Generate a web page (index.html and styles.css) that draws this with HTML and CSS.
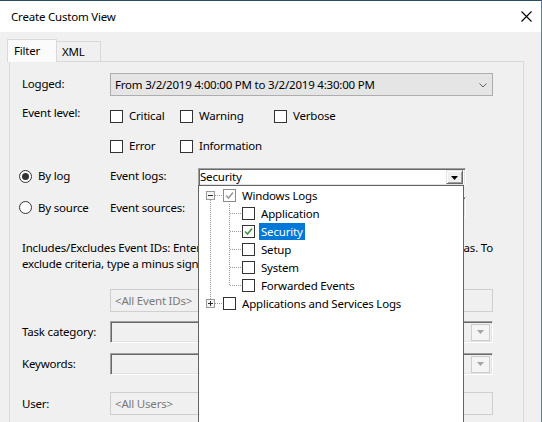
FILE: index.html
```html
<!DOCTYPE html>
<html>
<head>
<meta charset="utf-8">
<title>Create Custom View</title>
<link rel="stylesheet" href="styles.css">
</head>
<body>
<div class="window">
  <div class="titlebar">
    <span class="title">Create Custom View</span>
    <svg class="close" width="11" height="11" viewBox="0 0 11 11"><path d="M0.5 0.5L10.5 10.5M10.5 0.5L0.5 10.5" stroke="#000" stroke-width="1.1" fill="none"/></svg>
  </div>
  <div class="client">
    <div class="tabs">
      <div class="tab active">Filter</div>
      <div class="tab">XML</div>
    </div>
    <div class="panel">
      <div class="row row-logged">
        <div class="lbl">Logged:</div>
        <div class="combo-flat"><span class="ctext">From 3/2/2019 4:00:00 PM to 3/2/2019 4:30:00 PM</span>
          <svg class="chev" width="8" height="5" viewBox="0 0 8 5"><path d="M0.5 0.5L4 4L7.5 0.5" stroke="#606060" fill="none"/></svg>
        </div>
      </div>
      <div class="row row-level">
        <div class="lbl lbl-top">Event level:</div>
        <div class="levels">
          <label class="chk"><span class="cb"></span>Critical</label>
          <label class="chk"><span class="cb"></span>Warning</label>
          <label class="chk"><span class="cb"></span>Verbose</label>
          <label class="chk"><span class="cb"></span>Error</label>
          <label class="chk"><span class="cb"></span>Information</label>
        </div>
      </div>
      <div class="row row-log">
        <label class="rad"><span class="rb on"></span>By log</label>
        <div class="lbl2">Event logs:</div>
        <div class="combo"><span class="ctext2">Security</span><span class="dbtn"><svg width="7" height="4" viewBox="0 0 7 4"><path d="M0 0H7L3.5 4Z" fill="#000"/></svg></span></div>
      </div>
      <div class="row row-source">
        <label class="rad"><span class="rb"></span>By source</label>
        <div class="lbl2">Event sources:</div>
        <div class="combo combo-dis"><span class="ctext2"></span><span class="dbtn dbtn-dis"><svg width="7" height="4" viewBox="0 0 7 4"><path d="M0 0H7L3.5 4Z" fill="#a0a0a0"/></svg></span></div>
      </div>
      <div class="desc">
        <div class="dline first">Includes/Excludes Event IDs: Enter ID numbers and/or ID ranges separated by commas. To</div>
        <div class="dline">exclude criteria, type a minus sign first. For example 1,3,5-99,-76</div>
      </div>
      <div class="row row-ids">
        <div class="lbl"></div>
        <div class="tbox">&lt;All Event IDs&gt;</div>
      </div>
      <div class="row row-task">
        <div class="lbl">Task category:</div>
        <div class="dcombo"><span class="dbtn2"><svg width="7" height="4" viewBox="0 0 7 4"><path d="M0 0H7L3.5 4Z" fill="#a6a6a6"/></svg></span></div>
      </div>
      <div class="row row-kw">
        <div class="lbl">Keywords:</div>
        <div class="dcombo"><span class="dbtn2"><svg width="7" height="4" viewBox="0 0 7 4"><path d="M0 0H7L3.5 4Z" fill="#a6a6a6"/></svg></span></div>
      </div>
      <div class="row row-user">
        <div class="lbl">User:</div>
        <div class="tbox">&lt;All Users&gt;</div>
      </div>
    </div>
  </div>

  <div class="droplist">
    <div class="tnode">
      <svg class="gut0" width="24" height="18" viewBox="0 0 24 18">
        <path d="M11.5 14V18M16 9.5H24" stroke="#9a9a9a" stroke-dasharray="1 1" fill="none"/>
        <rect x="7.5" y="5.5" width="8" height="8" fill="#f4f4f4" stroke="#9a9a9a"/>
        <path d="M9 9.5H14" stroke="#2b2b2b"/>
      </svg>
      <span class="tcb tcb-part"><svg width="11" height="11" viewBox="0 0 11 11"><path d="M2 5.5L4.5 8L9 2.5" stroke="#9a9a9a" stroke-width="1.6" fill="none"/></svg></span>
      <span class="tlabel">Windows Logs</span>
    </div>
    <div class="tnode">
      <svg class="gut1" width="43" height="18" viewBox="0 0 43 18">
        <path d="M11.5 0V18M30.5 0V18M31 9.5H43" stroke="#9a9a9a" stroke-dasharray="1 1" fill="none"/>
      </svg>
      <span class="tcb"></span>
      <span class="tlabel">Application</span>
    </div>
    <div class="tnode">
      <svg class="gut1" width="43" height="18" viewBox="0 0 43 18">
        <path d="M11.5 0V18M30.5 0V18M31 9.5H43" stroke="#9a9a9a" stroke-dasharray="1 1" fill="none"/>
      </svg>
      <span class="tcb"><svg width="11" height="11" viewBox="0 0 11 11"><path d="M2 5.5L4.5 8L9 2.5" stroke="#3f9143" stroke-width="1.6" fill="none"/></svg></span>
      <span class="tlabel sel">Security</span>
    </div>
    <div class="tnode">
      <svg class="gut1" width="43" height="18" viewBox="0 0 43 18">
        <path d="M11.5 0V18M30.5 0V18M31 9.5H43" stroke="#9a9a9a" stroke-dasharray="1 1" fill="none"/>
      </svg>
      <span class="tcb"></span>
      <span class="tlabel">Setup</span>
    </div>
    <div class="tnode">
      <svg class="gut1" width="43" height="18" viewBox="0 0 43 18">
        <path d="M11.5 0V18M30.5 0V18M31 9.5H43" stroke="#9a9a9a" stroke-dasharray="1 1" fill="none"/>
      </svg>
      <span class="tcb"></span>
      <span class="tlabel">System</span>
    </div>
    <div class="tnode">
      <svg class="gut1" width="43" height="18" viewBox="0 0 43 18">
        <path d="M11.5 0V18M30.5 0V10M31 9.5H43" stroke="#9a9a9a" stroke-dasharray="1 1" fill="none"/>
      </svg>
      <span class="tcb"></span>
      <span class="tlabel">Forwarded Events</span>
    </div>
    <div class="tnode">
      <svg class="gut0" width="24" height="18" viewBox="0 0 24 18">
        <path d="M11.5 0V5M16 9.5H24" stroke="#9a9a9a" stroke-dasharray="1 1" fill="none"/>
        <rect x="7.5" y="5.5" width="8" height="8" fill="#f4f4f4" stroke="#9a9a9a"/>
        <path d="M9 9.5H14M11.5 7V12" stroke="#2b2b2b"/>
      </svg>
      <span class="tcb"></span>
      <span class="tlabel">Applications and Services Logs</span>
    </div>
  </div>
</div>
</body>
</html>
```

FILE: styles.css
```css
* { box-sizing: border-box; }
html, body { margin: 0; padding: 0; }
body {
  width: 542px;
  height: 422px;
  overflow: hidden;
  background: #f0f0f0;
  font-family: "Noto Sans", "Open Sans", sans-serif;
  font-size: 11.5px;
  letter-spacing: -0.2px;
  line-height: 16px;
  color: #000;
}
.window {
  position: relative;
  width: 542px;
  height: 422px;
  border-top: 1px solid #2b4a66;
  border-right: 1px solid #3b86cc;
  background: #f0f0f0;
  overflow: hidden;
}
.titlebar {
  height: 31px;
  background: #fff;
  display: flex;
  align-items: center;
  justify-content: space-between;
  padding: 0 9px 0 11px;
}
.title { padding-top: 1px; }
.close { display: block; }

.client {
  padding-top: 7px;
}
.tabs {
  display: flex;
  align-items: flex-end;
  height: 22px;
  padding-left: 9px;
}
.tab {
  height: 20px;
  padding: 0 0 0 5px;
  width: 44px;
  border: 1px solid #d9d9d9;
  border-bottom: none;
  border-left: none;
  background: #f0f0f0;
  line-height: 19px;
}
.tab.active {
  position: relative;
  z-index: 1;
  height: 23px;
  width: 50px;
  margin-left: -2px;
  margin-bottom: -1px;
  border-left: 1px solid #d9d9d9;
  background: #fbfbfb;
  padding-left: 6px;
  line-height: 21px;
}
.panel {
  margin-left: 9px;
  width: 515px;
  height: 400px;
  border: 1px solid #d9d9d9;
  padding: 0 30px 0 12px;
  background: #f0f0f0;
}
.row {
  display: grid;
  grid-template-columns: 88px 1fr;
  align-items: center;
}
.row-logged { margin-top: 11px; height: 23px; }
.row-logged .lbl { margin-top: -2px; }
.lbl { white-space: nowrap; }
.lbl-top { align-self: start; line-height: 14px; }
.combo-flat {
  height: 23px;
  border: 1px solid #adadad;
  background: #e5e5e5;
  display: flex;
  align-items: center;
  justify-content: space-between;
  padding: 0 5px 0 4px;
}
.chev { display: block; margin-top: 1px; }

.row-level { margin-top: 10px; align-items: start; }
.levels {
  display: grid;
  grid-template-columns: 70px 94px 1fr;
  grid-auto-rows: 20px;
  row-gap: 10px;
}
.chk {
  display: flex;
  align-items: center;
  gap: 6px;
  white-space: nowrap;
}
.cb {
  display: inline-block;
  width: 13px;
  height: 13px;
  border: 1px solid #333;
  background: #fff;
  flex: none;
}

.row-log, .row-source {
  grid-template-columns: 88px 88px 268px;
  height: 19px;
}
.row-log { margin-top: 10px; }
.row-source { margin-top: 12px; }
.rad {
  display: flex;
  align-items: center;
  gap: 6px;
  margin-left: -3px;
  white-space: nowrap;
}
.rb {
  width: 13px;
  height: 13px;
  border: 1px solid #333;
  border-radius: 50%;
  background: #fff;
  flex: none;
  display: flex;
  align-items: center;
  justify-content: center;
}
.rb.on::after {
  content: "";
  width: 7px;
  height: 7px;
  border-radius: 50%;
  background: #333;
}
.lbl2 { white-space: nowrap; }
.combo {
  align-self: start;
  margin-top: 2px;
  height: 18px;
  width: 268px;
  border-top: 1px solid #a0a0a0;
  border-left: 1px solid #a0a0a0;
  border-right: 1px solid #fff;
  border-bottom: 1px solid #fff;
  box-shadow: inset 1px 1px 0 #696969, inset -1px -1px 0 #e3e3e3;
  background: #fff;
  display: flex;
  align-items: center;
  padding: 1px 2px 1px 1px;
}
.ctext2 { flex: 1; line-height: 14px; }
.combo-dis { margin-top: 0; height: 21px; background: #f0f0f0; }
.dbtn {
  width: 17px;
  height: 14px;
  background: #f0f0f0;
  border-top: 1px solid #e3e3e3;
  border-left: 1px solid #e3e3e3;
  border-right: 1px solid #696969;
  border-bottom: 1px solid #696969;
  box-shadow: inset 1px 1px 0 #fff, inset -1px -1px 0 #a0a0a0;
  display: flex;
  align-items: center;
  justify-content: center;
}
.dbtn svg { display: block; margin-top: 1px; }
.dbtn-dis { height: 17px; }

.desc { margin-top: 24px; }
.dline {
  height: 16px;
  line-height: 16px;
  white-space: nowrap;
}
.dline.first {
  white-space: normal;
  text-align: justify;
  text-align-last: justify;
}

.row-ids { margin-top: 17px; }
.tbox {
  height: 23px;
  border: 1px solid #cfcfcf;
  background: #f0f0f0;
  color: #7a7a7a;
  display: flex;
  align-items: center;
  padding-left: 4px;
}
.row-task { margin-top: 9px; }
.row-kw { margin-top: 10px; }
.row-user { margin-top: 17px; }
.dcombo {
  height: 22px;
  border-top: 1px solid #a0a0a0;
  border-left: 1px solid #a0a0a0;
  border-right: 1px solid #fff;
  border-bottom: 1px solid #fff;
  box-shadow: inset 1px 1px 0 #696969, inset -1px -1px 0 #e3e3e3;
  background: #f0f0f0;
  display: flex;
  justify-content: flex-end;
  align-items: center;
  padding: 2px;
}
.dbtn2 {
  width: 19px;
  height: 17px;
  border: 1px solid #cdcdcd;
  background: #f4f4f4;
  display: flex;
  align-items: center;
  justify-content: center;
}
.dbtn2 svg { display: block; }

.droplist {
  position: absolute;
  left: 198px;
  top: 184px;
  width: 266px;
  height: 260px;
  background: #fff;
  border: 1px solid #646464;
  padding-top: 0;
}
.tnode {
  display: flex;
  align-items: center;
  height: 18px;
  white-space: nowrap;
}
.tnode svg.gut0, .tnode svg.gut1 { display: block; flex: none; }
.tcb {
  flex: none;
  width: 13px;
  height: 13px;
  border: 1px solid #333;
  background: #fff;
  display: flex;
  align-items: center;
  justify-content: center;
}
.tcb svg { display: block; }
.tcb-part { border-color: #8a8a8a; }
.tlabel {
  margin-left: 4px;
  padding: 0 2px;
  height: 17px;
  line-height: 17px;
}
.tlabel.sel {
  background: #0078d7;
  color: #fff;
}
```
